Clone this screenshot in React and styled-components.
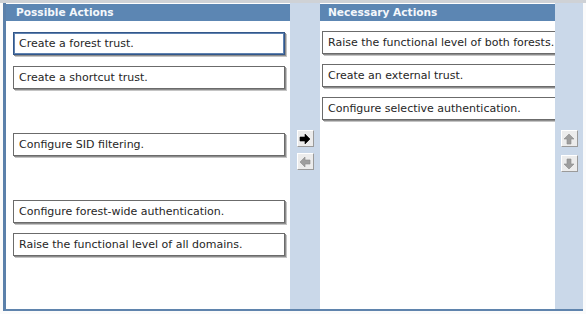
import React from "react";
import styled, {createGlobalStyle} from "styled-components";

const GlobalStyle = createGlobalStyle`
    html, body{
        margin: 0;
        padding: 0;
        background: #fbfbfb;
    }
    body{
        font-family: "DejaVu Sans", Verdana, sans-serif;
    }
`

const StyledPage = styled.div`
    width: 586px;
    height: 314px;
    overflow: hidden;
    border-top: 3px solid #cfd2d6;
    box-sizing: border-box;
    padding: 0 3px 0 3px;
`

const StyledFrame = styled.div`
    display: flex;
    height: 308px;
    border-left: 3px solid #5b80aa;
    border-bottom: 2px solid #5f84ad;
    box-sizing: border-box;
`

const StyledPanel = styled.div`
    width: ${({w}) => w}px;
    display: flex;
    flex-direction: column;
    background: #ffffff;
    overflow: hidden;
    .header{
        height: 17px;
        margin-top: 1px;
        background: #5c86b3;
        color: #f4f7fb;
        font-weight: bold;
        font-size: 10.6px;
        line-height: 16px;
        padding: 0 0 0 ${({headPad}) => headPad}px;
        white-space: nowrap;
    }
    .list{
        flex: 1;
        display: flex;
        flex-direction: column;
        gap: ${({gap}) => gap}px;
        padding: ${({top}) => top}px 0 0 ${({left}) => left}px;
    }
`

const StyledItem = styled.div`
    height: 23px;
    box-sizing: border-box;
    flex-shrink: 0;
    width: ${({w}) => w}px;
    visibility: ${({empty}) => empty ? "hidden" : "visible"};
    background: #fff;
    border: 1px solid ${({selected}) => selected ? "#33578a" : "#6b6b6b"};
    outline: ${({selected}) => selected ? "1px solid #5f82b0" : "none"};
    outline-offset: -2px;
    box-shadow: 1px 1px 0 #8c8c8c, 2px 2px 0 #c4c4c4;
    color: #262626;
    font-size: 11px;
    line-height: 21px;
    padding: 0 0 0 5px;
    white-space: nowrap;
    overflow: hidden;
`

const StyledColumn = styled.div`
    width: ${({w}) => w}px;
    background: #cad8e9;
    display: flex;
    flex-direction: column;
    align-items: center;
    gap: ${({gap}) => gap}px;
    padding-top: 127px;
    box-sizing: border-box;
`

const StyledButton = styled.div`
    width: 17px;
    height: 17px;
    box-sizing: border-box;
    background: #ececec;
    border: 1px solid;
    border-color: #ffffff #9a9a9a #9a9a9a #ffffff;
    display: flex;
    align-items: center;
    justify-content: center;
    svg{
        display: block;
    }
`

const arrows = {
    right: "M1 4 H6 V1 L11 6 L6 11 V8 H1 Z",
    left: "M11 4 H6 V1 L1 6 L6 11 V8 H11 Z",
    up: "M4 11 V6 H1 L6 1 L11 6 H8 V11 Z",
    down: "M4 1 V6 H1 L6 11 L11 6 H8 V1 Z"
}

function ArrowButton({dir, enabled}){
    return (
        <StyledButton>
            <svg width="12" height="12" viewBox="0 0 12 12">
                <path d={arrows[dir]} fill={enabled ? "#000" : "#9e9e9e"}
                    stroke={enabled ? "#000" : "#8a8a8a"} strokeWidth="0.6" strokeLinejoin="miter" />
            </svg>
        </StyledButton>
    )
}

const possible = [
    "Create a forest trust.",
    "Create a shortcut trust.",
    null,
    "Configure SID filtering.",
    null,
    "Configure forest-wide authentication.",
    "Raise the functional level of all domains."
]

const necessary = [
    "Raise the functional level of both forests.",
    "Create an external trust.",
    "Configure selective authentication."
]

export default function App(){
    return (
        <StyledPage>
            <GlobalStyle />
            <StyledFrame>
                <StyledPanel w={284} headPad={10} top={11} left={7} gap={10.5}>
                    <div className="header">Possible Actions</div>
                    <div className="list">
                        {possible.map((text, i) => (
                            <StyledItem key={i} w={272} empty={!text} selected={i === 0}>
                                {text || "\u00a0"}
                            </StyledItem>
                        ))}
                    </div>
                </StyledPanel>
                <StyledColumn w={30} gap={6}>
                    <ArrowButton dir="right" enabled />
                    <ArrowButton dir="left" />
                </StyledColumn>
                <StyledPanel w={235} headPad={8} top={10} left={2} gap={10}>
                    <div className="header">Necessary Actions</div>
                    <div className="list">
                        {necessary.map((text, i) => (
                            <StyledItem key={i} w={260}>{text}</StyledItem>
                        ))}
                    </div>
                </StyledPanel>
                <StyledColumn w={28} gap={8}>
                    <ArrowButton dir="up" />
                    <ArrowButton dir="down" />
                </StyledColumn>
            </StyledFrame>
        </StyledPage>
    )
}
